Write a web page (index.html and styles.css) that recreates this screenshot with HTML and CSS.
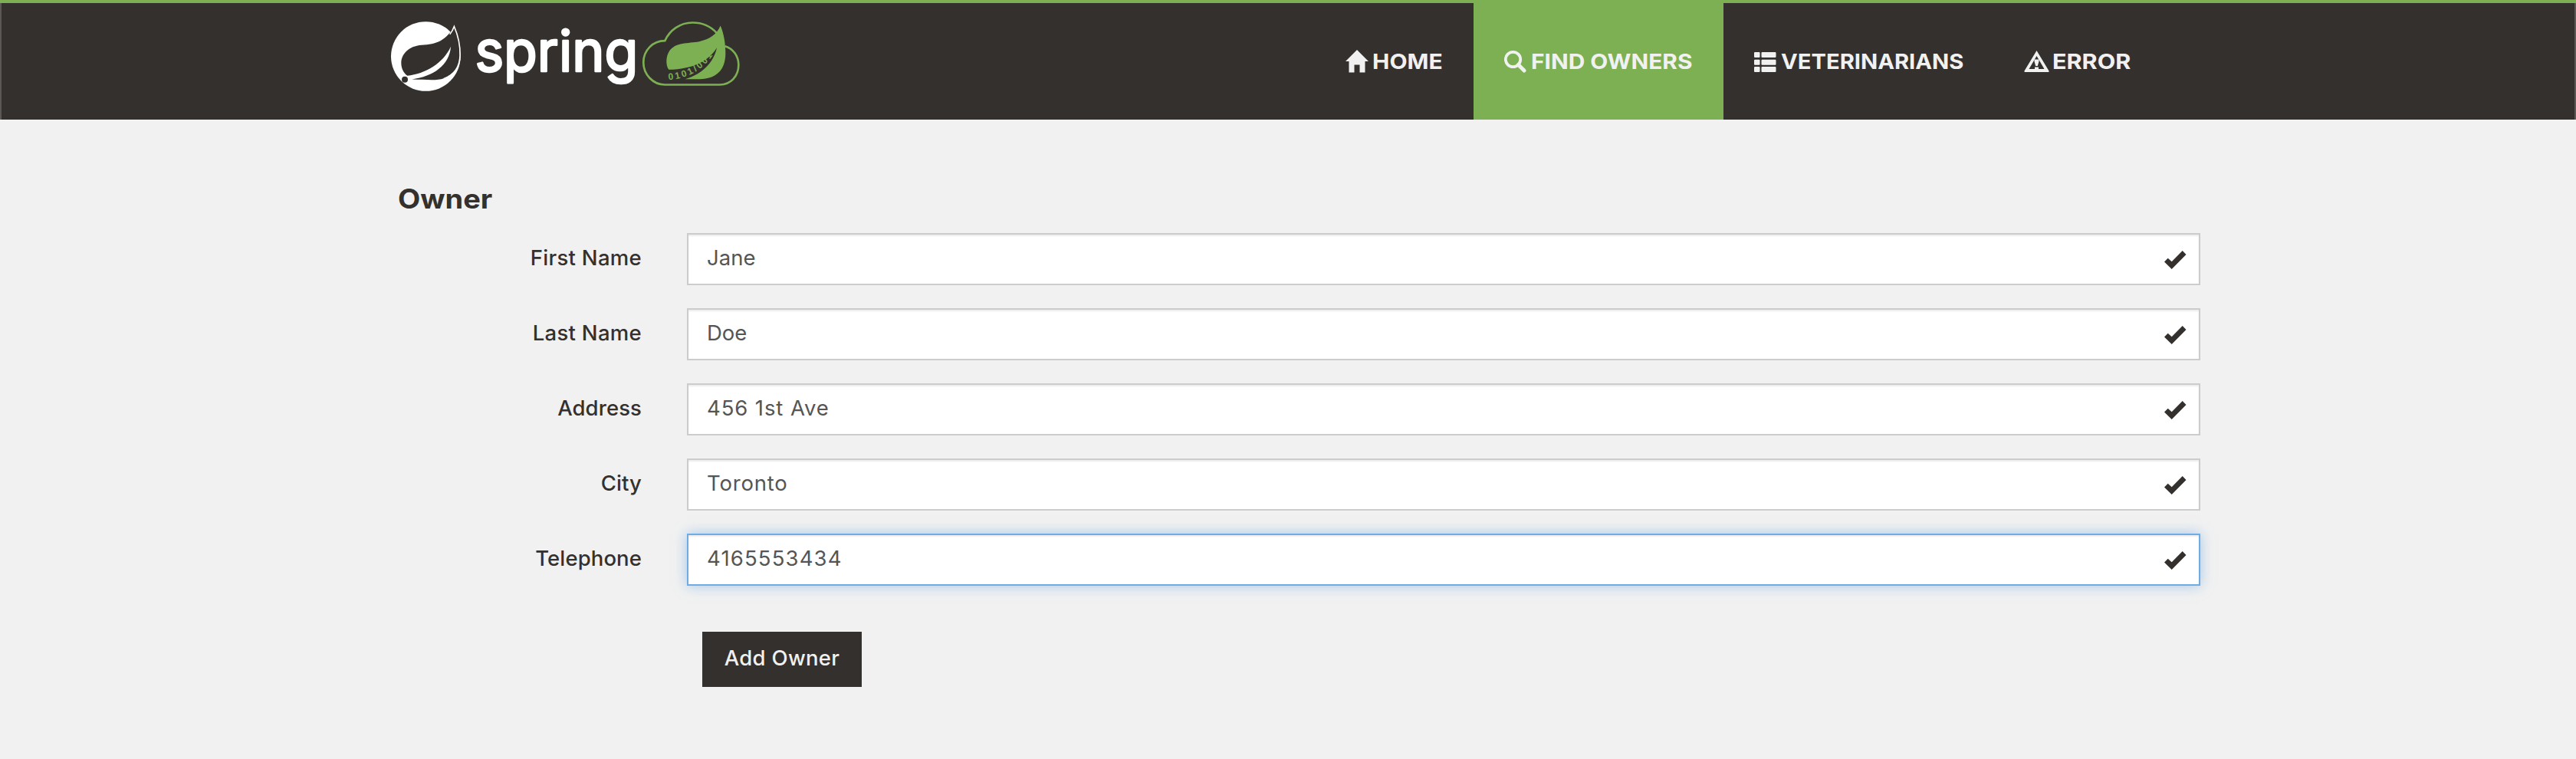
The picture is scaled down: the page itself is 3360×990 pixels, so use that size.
FILE: index.html
```html
<!DOCTYPE html>
<html lang="en">
<head>
<meta charset="utf-8">
<title>PetClinic</title>
<link rel="stylesheet" href="styles.css">
</head>
<body>
<header class="navbar">
  <a class="brand" aria-label="spring">
    <svg class="logo" viewBox="60 84 1364 272">
      <defs><path id="bits" d="M1145 312C1230 306 1290 266 1334 192"/></defs>
      <circle cx="196" cy="220" r="136" fill="#fff"/>
      <path class="ink" d="M307 101C278 158 236 174 180 176C128 180 100 212 100 247C100 268 110 286 124 296C194 288 262 250 294 182C288 256 226 298 142 310C200 311 240 316 266 306C310 288 331 262 331 218C331 176 324 138 307 101Z"/>
      <path d="M290 134C298 124 303 114 307 103C322 138 331 176 330 216C329 262 306 292 266 308" fill="none" stroke="#fff" stroke-width="5"/>
      <circle class="ink" cx="114" cy="311" r="12"/>
      <text class="wordmark" x="388" y="278" textLength="638" lengthAdjust="spacingAndGlyphs">spring</text>
      <path class="cloud" d="M1131 331C1084 331 1047 290 1047 244C1047 196 1084 159 1131 159C1150 118 1190 88 1239 88C1282 88 1312 105 1333 128M1366 180C1398 190 1419 218 1419 254C1419 298 1388 331 1346 331H1131"/>
      <path class="leaf" d="M1348 100C1362 132 1368 170 1368 208C1368 275 1330 308 1268 309H1210C1275 290 1322 245 1334 186C1302 238 1240 270 1146 272C1134 255 1134 222 1148 200C1172 163 1222 170 1265 162C1306 153 1336 132 1348 100Z"/>
      <text class="bits"><textPath href="#bits" textLength="205">0101/001</textPath></text>
    </svg>
  </a>
  <nav class="menu">
    <a class="item home">
      <svg class="icon" viewBox="0 0 30 30"><path d="M15 0L30 15H25.500V29.500H18.500V19.500H11.500V29.500H4.500V15H0Z"/></svg><span class="label">HOME</span>
    </a>
    <a class="item find active">
      <svg class="icon" viewBox="0 0 30 30"><circle cx="11.500" cy="12.500" r="9.700" class="ring"/><path d="M18.500 19.500L26 27" class="handle"/></svg><span class="label">FIND OWNERS</span>
    </a>
    <a class="item vets">
      <svg class="icon" viewBox="0 0 30 30"><rect y="3" width="7.500" height="7" rx="1"/><rect y="12.700" width="7.500" height="7" rx="1"/><rect y="22" width="7.500" height="7" rx="1"/><rect x="9.500" y="3" width="19" height="7" rx="1"/><rect x="9.500" y="12.700" width="19" height="7" rx="1"/><rect x="9.500" y="22" width="19" height="7" rx="1"/></svg><span class="label">VETERINARIANS</span>
    </a>
    <a class="item error">
      <svg class="icon" viewBox="0 0 33 30"><path fill-rule="evenodd" d="M16.500 1L32.500 27.500Q33 29 31.500 29H1.500Q0 29 .5 27.500ZM16.500 8L6.500 25H14V22.500H19V25H26.500Z"/><path d="M13.500 12.500H19.500V15L17.800 21H15.200L13.500 15Z"/></svg><span class="label">ERROR</span>
    </a>
  </nav>
</header>
<main class="content">
  <h2 class="title">Owner</h2>
  <form class="form">
    <div class="row"><label class="name first">First Name</label><div class="field"><span class="value">Jane</span><svg class="check" viewBox="0 0 29 24"><path d="M0 14.500L4.700 9.700L9.700 14.200L23.700 0L28.500 5L9.700 24Z"/></svg></div></div>
    <div class="row"><label class="name last">Last Name</label><div class="field"><span class="value">Doe</span><svg class="check" viewBox="0 0 29 24"><path d="M0 14.500L4.700 9.700L9.700 14.200L23.700 0L28.500 5L9.700 24Z"/></svg></div></div>
    <div class="row"><label class="name">Address</label><div class="field"><span class="value street">456 1st Ave</span><svg class="check" viewBox="0 0 29 24"><path d="M0 14.500L4.700 9.700L9.700 14.200L23.700 0L28.500 5L9.700 24Z"/></svg></div></div>
    <div class="row"><label class="name">City</label><div class="field"><span class="value town">Toronto</span><svg class="check" viewBox="0 0 29 24"><path d="M0 14.500L4.700 9.700L9.700 14.200L23.700 0L28.500 5L9.700 24Z"/></svg></div></div>
    <div class="row"><label class="name">Telephone</label><div class="field focused"><span class="value number">4165553434</span><svg class="check" viewBox="0 0 29 24"><path d="M0 14.500L4.700 9.700L9.700 14.200L23.700 0L28.500 5L9.700 24Z"/></svg></div></div>
    <button class="submit" type="button">Add Owner</button>
  </form>
</main>
</body>
</html>
```
FILE: styles.css
```css
* { box-sizing: border-box; }
body { margin: 0; background: #f1f1f1; color: #34302d; font-family: Inter, "Open Sans", sans-serif; font-size: 27.5px; }
.navbar { display: flex; height: 156px; border-top: 4px solid #7db053; background: #34302d; box-shadow: inset 2px 0 #5b5855, inset -2px 0 #5b5855; padding: 0 541px 0 510px; }
.brand { padding-top: 24px; }
.logo { display: block; width: 455px; height: 91px; overflow: visible; }
.ink { fill: #34302d; }
.wordmark { font: 400 222px Inter, sans-serif; fill: #fff; stroke: #fff; stroke-width: 8; stroke-linejoin: round; }
.cloud { fill: none; stroke: #7db053; stroke-width: 8; }
.leaf { fill: #7db053; }
.bits { font: 700 36px "Liberation Sans", sans-serif; fill: #7db053; }
.menu { display: flex; margin-left: auto; }
.item { display: flex; align-items: center; padding-left: 40px; color: #f1f1f1; font-weight: 700; }
.home { width: 207px; }
.find { width: 326px; }
.vets { width: 352px; }
.error { width: 219px; }
.active { background: #7db053; }
.icon { flex: none; width: 30px; height: 30px; margin-right: 5px; fill: currentColor; }
.error .icon { width: 33px; margin-right: 4px; }
.ring, .handle { fill: none; stroke: currentColor; stroke-width: 3.8; }
.handle { stroke-width: 5; stroke-linecap: round; }
.label { white-space: nowrap; transform-origin: left; }
.home .label { transform: scaleX(1.09); }
.find .label { transform: scaleX(1.085); }
.vets .label { transform: scaleX(1.06); }
.error .label { transform: scaleX(1.11); }
.content { padding: 80px 490px 0 519px; }
.title { margin: 0; width: 120px; height: 68px; font-size: 35px; line-height: 47px; font-weight: 700; transform: scaleX(1.085); transform-origin: left; }
.form { display: flex; flex-direction: column; gap: 30px; }
.row { display: flex; height: 68px; }
.name { width: 318px; margin-right: 59px; text-align: right; line-height: 65px; font-weight: 500; letter-spacing: .1px; }
.first, .last { letter-spacing: .3px; }
.field { display: flex; flex: 1; justify-content: space-between; align-items: center; padding: 0 16px 0 24px; border: 2px solid #ccc; background: #fff; color: #555; box-shadow: inset 0 2px 2px rgba(0,0,0,.075); }
.focused { border-color: #70abe4; box-shadow: inset 0 2px 2px rgba(0,0,0,.075), 0 0 16px rgba(112,171,228,.6); }
.value { padding-bottom: 4px; white-space: nowrap; }
.street { letter-spacing: .9px; }
.town { letter-spacing: .8px; }
.number { letter-spacing: 1.15px; }
.check { width: 29px; height: 24px; margin-top: 2px; fill: #34302d; }
.submit { width: 208px; height: 72px; margin: 30px 0 0 397px; padding: 0 0 4px; border: 0; background: #34302d; color: #f1f1f1; font: 500 27.5px Inter, sans-serif; letter-spacing: .3px; }
```
